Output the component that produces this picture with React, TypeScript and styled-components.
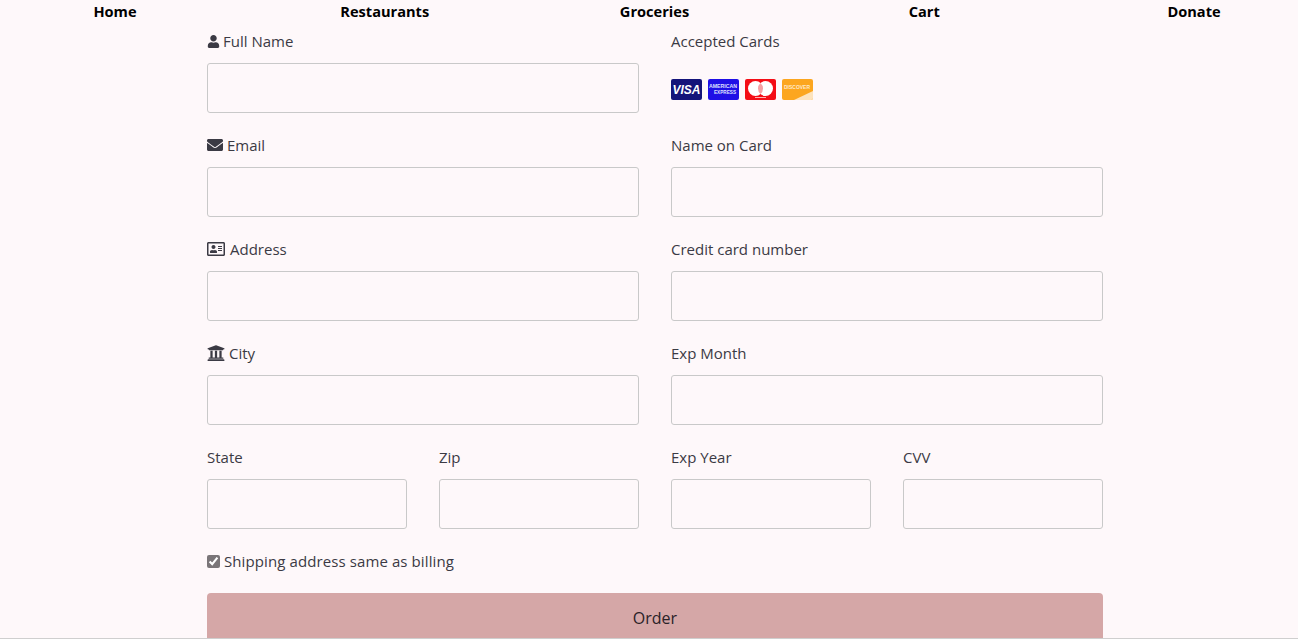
import React from 'react';
import styled, { createGlobalStyle } from 'styled-components';
import { FaEnvelope, FaRegAddressCard, FaUniversity, FaUser } from 'react-icons/fa';

const GlobalStyle = createGlobalStyle`
    html, body {
        margin: 0;
        padding: 0;
        background: #fef8fa;
    }
    * {
        box-sizing: border-box;
    }
`;

const Page = styled.div`
    height: 639px;
    overflow: hidden;
    border-bottom: 1px solid #cfcfcf;
    font-family: "Open Sans", "Liberation Sans", sans-serif;
    font-size: 15px;
    color: #3b3a44;
`;

const Nav = styled.ul`
    display: grid;
    grid-template-columns: repeat(5, 100px);
    justify-content: space-between;
    margin: 0;
    padding: 0 54px 0 65px;
    height: 29px;
    list-style: none;
`;

const NavItem = styled.li`
    height: 23px;
    line-height: 23px;
    text-align: center;
    font-size: 14.6px;
    font-weight: 700;
    color: #000;
`;

const Form = styled.form`
    width: 896px;
    margin-left: 207px;
`;

const Columns = styled.div`
    display: grid;
    grid-template-columns: 432px 432px;
    column-gap: 32px;
`;

const Column = styled.div`
    display: flex;
    flex-direction: column;
`;

const Field = styled.div`
    margin-bottom: 20px;
`;

const Label = styled.label<{ $gap?: number }>`
    display: flex;
    align-items: center;
    gap: ${(props) => props.$gap ?? 4}px;
    height: 24px;
    margin-bottom: 10px;
    line-height: 24px;
`;

const Input = styled.input`
    display: block;
    width: 100%;
    height: 50px;
    padding: 6px 12px;
    border: 1px solid #c9c9c9;
    border-radius: 3px;
    background: transparent;
    outline: none;
`;

const Split = styled.div`
    display: grid;
    grid-template-columns: 200px 200px;
    column-gap: 32px;
`;

const CardRow = styled.div`
    display: flex;
    gap: 6px;
    height: 50px;
    padding-top: 16px;
`;

const CheckRow = styled.label`
    display: flex;
    align-items: center;
    gap: 4px;
    height: 24px;
    margin-bottom: 20px;
    letter-spacing: 0.1px;
`;

const Check = styled.input`
    width: 13px;
    height: 13px;
    margin: 0;
    accent-color: #7a7578;
`;

const OrderButton = styled.button`
    display: block;
    width: 100%;
    height: 50px;
    border: none;
    border-radius: 4px;
    background: #d5a7a7;
    color: #2a2228;
    font-family: inherit;
    font-size: 16px;
`;

function VisaCard() {
    return (
        <svg width="31" height="21" viewBox="0 0 31 21">
            <rect width="31" height="21" rx="2" fill="#14147a" />
            <text x="15.5" y="15" textAnchor="middle" fontFamily="Liberation Sans" fontSize="12" fontWeight="700" fontStyle="italic" fill="#fff">VISA</text>
        </svg>
    );
}

function AmexCard() {
    return (
        <svg width="31" height="21" viewBox="0 0 31 21">
            <rect width="31" height="21" rx="2" fill="#1f0fe6" />
            <text x="1" y="8.5" textLength="28" lengthAdjust="spacingAndGlyphs" fontFamily="Liberation Sans" fontSize="5.5" fontWeight="700" fill="#dfe0ff">AMERICAN</text>
            <text x="6" y="14.5" textLength="22" lengthAdjust="spacingAndGlyphs" fontFamily="Liberation Sans" fontSize="5.5" fontWeight="700" fill="#dfe0ff">EXPRESS</text>
        </svg>
    );
}

function MasterCard() {
    return (
        <svg width="31" height="21" viewBox="0 0 31 21">
            <rect width="31" height="21" rx="2" fill="#f40d16" />
            <circle cx="10.5" cy="9.5" r="7.5" fill="#fff" />
            <circle cx="20.5" cy="9.5" r="7.5" fill="#fff" />
            <path d="M15.5 3.9a7.5 7.5 0 0 1 0 11.2a7.5 7.5 0 0 1 0-11.2z" fill="#f6a0a4" />
            <rect x="10" y="18" width="11" height="1" fill="#ffb0b0" />
        </svg>
    );
}

function DiscoverCard() {
    return (
        <svg width="31" height="21" viewBox="0 0 31 21">
            <rect width="31" height="21" rx="2" fill="#fca61f" />
            <path d="M12 21 L31 12 V19 a2 2 0 0 1 -2 2z" fill="#fde3bd" />
            <text x="2" y="10" textLength="26" lengthAdjust="spacingAndGlyphs" fontFamily="Liberation Sans" fontSize="5.5" fontWeight="700" fill="#ffe9c9">DISCOVER</text>
        </svg>
    );
}

export default function App() {
    return (
        <Page>
            <GlobalStyle />
            <Nav>
                {['Home', 'Restaurants', 'Groceries', 'Cart', 'Donate'].map((item) => (
                    <NavItem key={item}>{item}</NavItem>
                ))}
            </Nav>
            <Form>
                <Columns>
                    <Column>
                        <Field>
                            <Label $gap={3}><FaUser size={13} />Full Name</Label>
                            <Input />
                        </Field>
                        <Field>
                            <Label><FaEnvelope size={16} />Email</Label>
                            <Input />
                        </Field>
                        <Field>
                            <Label $gap={5}><FaRegAddressCard size={18} />Address</Label>
                            <Input />
                        </Field>
                        <Field>
                            <Label><FaUniversity size={18} />City</Label>
                            <Input />
                        </Field>
                        <Split>
                            <Field>
                                <Label>State</Label>
                                <Input />
                            </Field>
                            <Field>
                                <Label>Zip</Label>
                                <Input />
                            </Field>
                        </Split>
                    </Column>
                    <Column>
                        <Field>
                            <Label>Accepted Cards</Label>
                            <CardRow>
                                <VisaCard />
                                <AmexCard />
                                <MasterCard />
                                <DiscoverCard />
                            </CardRow>
                        </Field>
                        <Field>
                            <Label>Name on Card</Label>
                            <Input />
                        </Field>
                        <Field>
                            <Label>Credit card number</Label>
                            <Input />
                        </Field>
                        <Field>
                            <Label>Exp Month</Label>
                            <Input />
                        </Field>
                        <Split>
                            <Field>
                                <Label>Exp Year</Label>
                                <Input />
                            </Field>
                            <Field>
                                <Label>CVV</Label>
                                <Input />
                            </Field>
                        </Split>
                    </Column>
                </Columns>
                <CheckRow>
                    <Check type="checkbox" defaultChecked />
                    Shipping address same as billing
                </CheckRow>
                <OrderButton type="button">Order</OrderButton>
            </Form>
        </Page>
    );
}
